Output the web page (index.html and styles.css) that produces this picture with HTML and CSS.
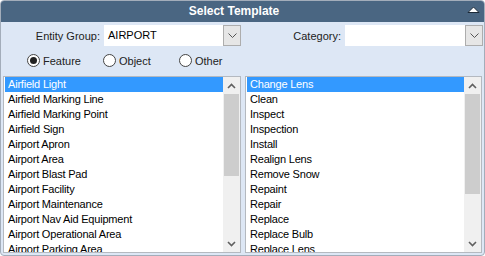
FILE: index.html
```html
<!DOCTYPE html>
<html lang="en">
<head>
  <meta charset="UTF-8" />
  <title>Select Template</title>
  <link rel="stylesheet" href="styles.css">
</head>
<body>

  <div class="panel">
    <div class="panel-header">
      <span class="panel-title">Select Template</span>
      <span class="collapse-btn">
        <svg width="13" height="8" viewBox="0 0 13 8">
          <polygon points="1,6.5 6.5,1 12,6.5" fill="#fff" stroke="#1c2a38" stroke-width="1"/>
        </svg>
      </span>
    </div>

    <div class="panel-body">
      <div class="filter-row">
        <label class="field-label">Entity Group:</label>
        <div class="combo combo-entity">
          <span class="combo-value">AIRPORT</span>
          <span class="combo-btn">
            <svg width="9" height="5" viewBox="0 0 9 5"><polyline points="0.5,0.5 4.5,4.5 8.5,0.5" fill="none" stroke="#555" stroke-width="1"/></svg>
          </span>
        </div>
        <label class="field-label field-label-grow">Category:</label>
        <div class="combo combo-category">
          <span class="combo-value"></span>
          <span class="combo-btn">
            <svg width="9" height="5" viewBox="0 0 9 5"><polyline points="0.5,0.5 4.5,4.5 8.5,0.5" fill="none" stroke="#555" stroke-width="1"/></svg>
          </span>
        </div>
      </div>

      <div class="radio-row">
        <label class="radio"><span class="radio-dot checked"></span>Feature</label>
        <label class="radio"><span class="radio-dot"></span>Object</label>
        <label class="radio"><span class="radio-dot"></span>Other</label>
      </div>

      <div class="lists">
        <div class="listbox listbox-left">
          <ul class="list-items">
            <li class="selected">Airfield Light</li>
            <li>Airfield Marking Line</li>
            <li>Airfield Marking Point</li>
            <li>Airfield Sign</li>
            <li>Airport Apron</li>
            <li>Airport Area</li>
            <li>Airport Blast Pad</li>
            <li>Airport Facility</li>
            <li>Airport Maintenance</li>
            <li>Airport Nav Aid Equipment</li>
            <li>Airport Operational Area</li>
            <li>Airport Parking Area</li>
          </ul>
          <div class="scrollbar">
            <span class="scroll-arrow">
              <svg width="9" height="6" viewBox="0 0 9 6"><polyline points="1,5 4.5,1.5 8,5" fill="none" stroke="#606060" stroke-width="1.6"/></svg>
            </span>
            <div class="scroll-track">
              <div class="scroll-thumb thumb-left"></div>
            </div>
            <span class="scroll-arrow">
              <svg width="9" height="6" viewBox="0 0 9 6"><polyline points="1,1 4.5,4.5 8,1" fill="none" stroke="#606060" stroke-width="1.6"/></svg>
            </span>
          </div>
        </div>

        <div class="listbox listbox-right">
          <ul class="list-items">
            <li class="selected">Change Lens</li>
            <li>Clean</li>
            <li>Inspect</li>
            <li>Inspection</li>
            <li>Install</li>
            <li>Realign Lens</li>
            <li>Remove Snow</li>
            <li>Repaint</li>
            <li>Repair</li>
            <li>Replace</li>
            <li>Replace Bulb</li>
            <li>Replace Lens</li>
          </ul>
          <div class="scrollbar">
            <span class="scroll-arrow">
              <svg width="9" height="6" viewBox="0 0 9 6"><polyline points="1,5 4.5,1.5 8,5" fill="none" stroke="#606060" stroke-width="1.6"/></svg>
            </span>
            <div class="scroll-track">
              <div class="scroll-thumb thumb-right"></div>
            </div>
            <span class="scroll-arrow">
              <svg width="9" height="6" viewBox="0 0 9 6"><polyline points="1,1 4.5,4.5 8,1" fill="none" stroke="#606060" stroke-width="1.6"/></svg>
            </span>
          </div>
        </div>
      </div>
    </div>
  </div>

</body>
</html>
```

FILE: styles.css
```css
body {
  margin: 0;
  font-family: "Liberation Sans", Arial, sans-serif;
  font-size: 11px;
  color: #000;
  background: #fff;
}

.panel {
  width: 485px;
  height: 256px;
  box-sizing: border-box;
  border: 1px solid #a3adba;
  border-radius: 4px;
  background-color: #dde7f5;
  overflow: hidden;
}

.panel-header {
  display: flex;
  height: 21px;
  background-color: #4a6682;
  color: #fff;
}

.panel-title {
  flex: 1;
  text-align: center;
  font-weight: bold;
  font-size: 12px;
  line-height: 21px;
}

.collapse-btn {
  width: 17px;
  display: flex;
  align-items: center;
  padding-bottom: 3px;
  box-sizing: border-box;
}

.panel-body {
  padding-top: 3px;
}

.filter-row {
  display: flex;
  align-items: center;
  height: 21px;
}

.field-label {
  width: 99px;
  text-align: right;
  margin-right: 4px;
  color: #222;
}

.field-label-grow {
  width: 100px;
}

.combo {
  display: flex;
  height: 21px;
  background-color: #fff;
  box-sizing: border-box;
}

.combo-entity {
  width: 137px;
}

.combo-category {
  width: 138px;
}

.combo-value {
  flex: 1;
  line-height: 21px;
  padding-left: 4px;
}

.combo-btn {
  width: 18px;
  box-sizing: border-box;
  border: 1px solid #adadad;
  background-color: #e6e6e6;
  display: flex;
  align-items: center;
  justify-content: center;
}

.radio-row {
  display: flex;
  align-items: center;
  height: 15px;
  margin-top: 7px;
  padding-left: 26px;
}

.radio {
  display: flex;
  align-items: center;
  width: 76px;
  color: #222;
}

.radio-dot {
  width: 13px;
  height: 13px;
  box-sizing: border-box;
  border: 1px solid #444;
  border-radius: 50%;
  background-color: #fff;
  margin-right: 3px;
  display: flex;
  align-items: center;
  justify-content: center;
}

.radio-dot.checked::after {
  content: "";
  width: 7px;
  height: 7px;
  border-radius: 50%;
  background-color: #222;
}

.lists {
  display: grid;
  grid-template-columns: 238px 237px;
  column-gap: 4px;
  padding-left: 2px;
  margin-top: 8px;
}

.listbox {
  display: flex;
  height: 177px;
  box-sizing: border-box;
  border: 1px solid #b4b9c0;
  background-color: #fff;
}

.list-items {
  flex: 1;
  list-style: none;
  margin: 0;
  padding: 0 0 0 1px;
  overflow: hidden;
}

.list-items li {
  height: 15px;
  line-height: 15px;
  padding-left: 3px;
  letter-spacing: -0.2px;
  white-space: nowrap;
}

.list-items li.selected {
  background-color: #3399ff;
  color: #fff;
}

.scrollbar {
  width: 17px;
  display: flex;
  flex-direction: column;
  background-color: #f0f0f0;
}

.scroll-arrow {
  height: 17px;
  display: flex;
  align-items: center;
  justify-content: center;
}

.scroll-track {
  flex: 1;
}

.scroll-thumb {
  margin: 0 1px;
  background-color: #cdcdcd;
}

.thumb-left {
  height: 82px;
}

.thumb-right {
  height: 100px;
}
```
